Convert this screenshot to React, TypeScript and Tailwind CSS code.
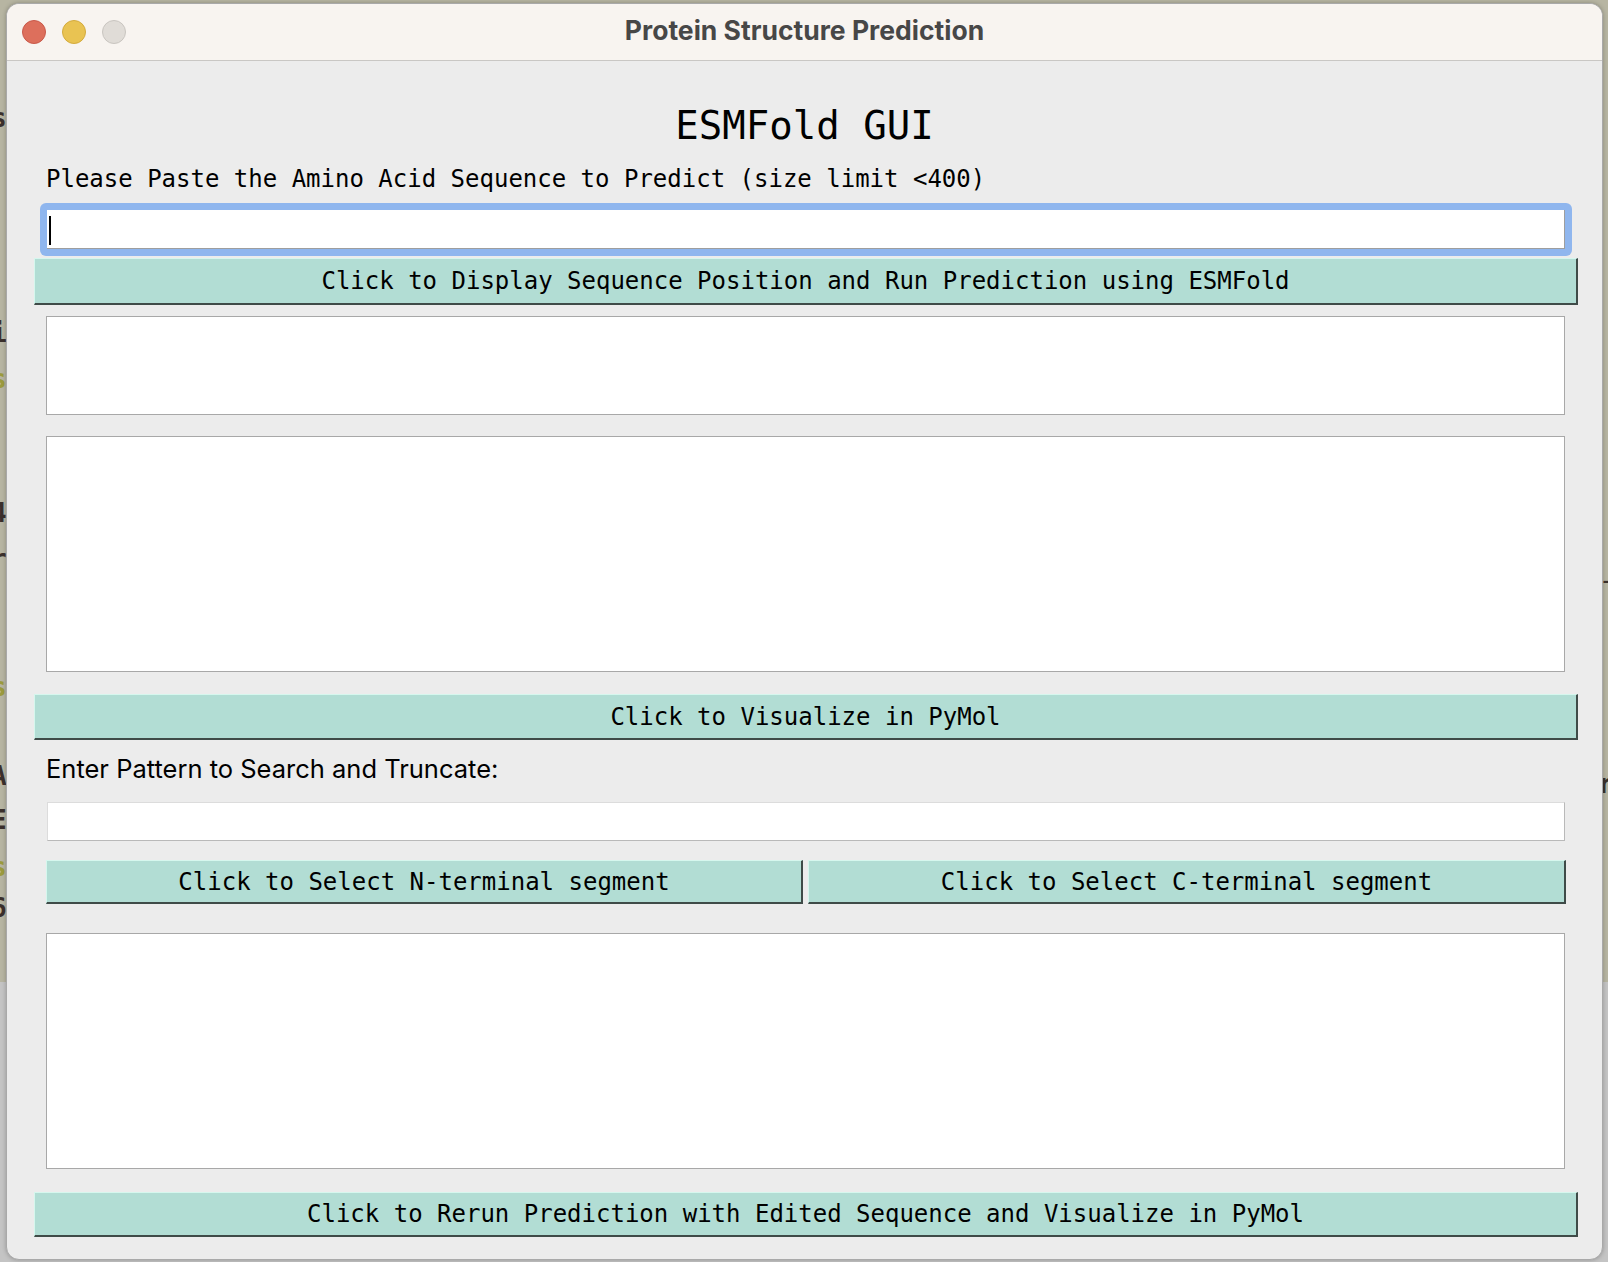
import React from "react";

const mono = "font-['DejaVu_Sans_Mono','Liberation_Mono',monospace]";

// glyphs of the editor window that peeks out behind the app window
const behindLeft = [
  { ch: "s", y: 104, c: "text-[#3b302c]" },
  { ch: "i", y: 319, c: "text-[#3b302c]" },
  { ch: "s", y: 365, c: "text-[#9c9b3e]" },
  { ch: "4", y: 499, c: "text-[#3b302c]" },
  { ch: "r", y: 545, c: "text-[#3b302c]" },
  { ch: "s", y: 673, c: "text-[#9c9b3e]" },
  { ch: "A", y: 762, c: "text-[#3b302c]" },
  { ch: "E", y: 806, c: "text-[#3b302c]" },
  { ch: "s", y: 853, c: "text-[#9c9b3e]" },
  { ch: "6", y: 894, c: "text-[#3b302c]" },
];

function TealButton({ label, className = "" }: { label: string; className?: string }) {
  return (
    <div
      className={`flex items-center justify-center bg-[#b2ddd4] border-t border-l border-t-[#d6f7ee] border-l-[#d6f7ee] border-b-2 border-r-2 border-b-[#3f4b48] border-r-[#3f4b48] text-[24px] text-black ${mono} ${className}`}
    >
      {label}
    </div>
  );
}

export default function App() {
  return (
    <div className="relative w-[1608px] h-[1262px] overflow-hidden bg-[#c4c4c4]">
      {/* editor behind the window */}
      <div className="absolute left-0 top-0 w-full h-[982px] bg-[#b7b5a2]">
        {behindLeft.map((g, i) => (
          <span
            key={i}
            className={`absolute left-[-9px] font-bold text-[26px] leading-[28px] ${mono} ${g.c}`}
            style={{ top: g.y }}
          >
            {g.ch}
          </span>
        ))}
        <span className={`absolute left-[1599px] top-[566px] text-[26px] leading-[28px] text-[#3b302c] ${mono}`}>-</span>
        <span className={`absolute left-[1598px] top-[770px] font-bold text-[26px] leading-[28px] text-[#3b302c] ${mono}`}>r</span>
      </div>

      <div className="relative pt-[3px] pl-[6px]">
        <div className="w-[1597px] h-[1257px] rounded-[13px] overflow-hidden border border-[#a9a9a9] bg-[#ececec] flex flex-col shadow-[0_0_4px_rgba(0,0,0,0.25)]">
          {/* title bar */}
          <div className="relative h-[57px] shrink-0 bg-[#f8f4f0] border-b border-[#c9c7c4] flex items-center">
            <div className="flex items-center gap-[16px] pl-[15px]">
              <span className="w-[24px] h-[24px] rounded-full bg-[#dd6f5c] border border-[#c9594a]" />
              <span className="w-[24px] h-[24px] rounded-full bg-[#e9c352] border border-[#d4ab3d]" />
              <span className="w-[24px] h-[24px] rounded-full bg-[#e0dcd7] border border-[#c9c5c0]" />
            </div>
            <div className="absolute inset-0 pb-[2px] flex items-center justify-center font-['Inter','Noto_Sans',sans-serif] font-bold text-[26.5px] text-[#474747]">
              Protein Structure Prediction
            </div>
          </div>

          {/* content */}
          <div className="flex flex-col">
            <div className={`mt-[42px] text-center text-[39px] leading-[46px] text-black ${mono}`}>ESMFold GUI</div>

            <div className={`mt-[16px] ml-[39px] text-[24px] leading-[28px] text-black ${mono}`}>
              Please Paste the Amino Acid Sequence to Predict (size limit &lt;400)
            </div>

            <div className="mt-[10px] ml-[33px] w-[1532px] rounded-[6px] bg-[#8fb6ee] p-[7px]">
              <div className="h-[39px] bg-white border-b border-r border-[#9e9e9e] pt-[6px] pl-[2px]">
                <div className="w-[2px] h-[29px] bg-black" />
              </div>
            </div>

            <TealButton
              label="Click to Display Sequence Position and Run Prediction using ESMFold"
              className="mt-[2px] ml-[27px] w-[1544px] h-[47px]"
            />

            <div className="mt-[11px] ml-[39px] w-[1519px] h-[99px] bg-white border border-[#a8a8a8]" />
            <div className="mt-[21px] ml-[39px] w-[1519px] h-[236px] bg-white border border-[#a8a8a8]" />

            <TealButton label="Click to Visualize in PyMol" className="mt-[22px] ml-[27px] w-[1544px] h-[46px]" />

            <div className="mt-[13px] ml-[39px] font-['Inter','Noto_Sans',sans-serif] text-[25.5px] leading-[32px] text-black">
              Enter Pattern to Search and Truncate:
            </div>

            <div className="mt-[17px] ml-[40px] w-[1518px] h-[39px] bg-white border border-t-[#dcdcdc] border-l-[#dcdcdc] border-b-[#b9b9b9] border-r-[#b9b9b9]" />

            <div className="mt-[19px] ml-[39px] flex gap-[5px]">
              <TealButton label="Click to Select N-terminal segment" className="w-[757px] h-[44px]" />
              <TealButton label="Click to Select C-terminal segment" className="w-[758px] h-[44px]" />
            </div>

            <div className="mt-[29px] ml-[39px] w-[1519px] h-[236px] bg-white border border-[#a8a8a8]" />

            <TealButton
              label="Click to Rerun Prediction with Edited Sequence and Visualize in PyMol"
              className="mt-[23px] ml-[27px] w-[1544px] h-[45px]"
            />
          </div>
        </div>
      </div>
    </div>
  );
}
